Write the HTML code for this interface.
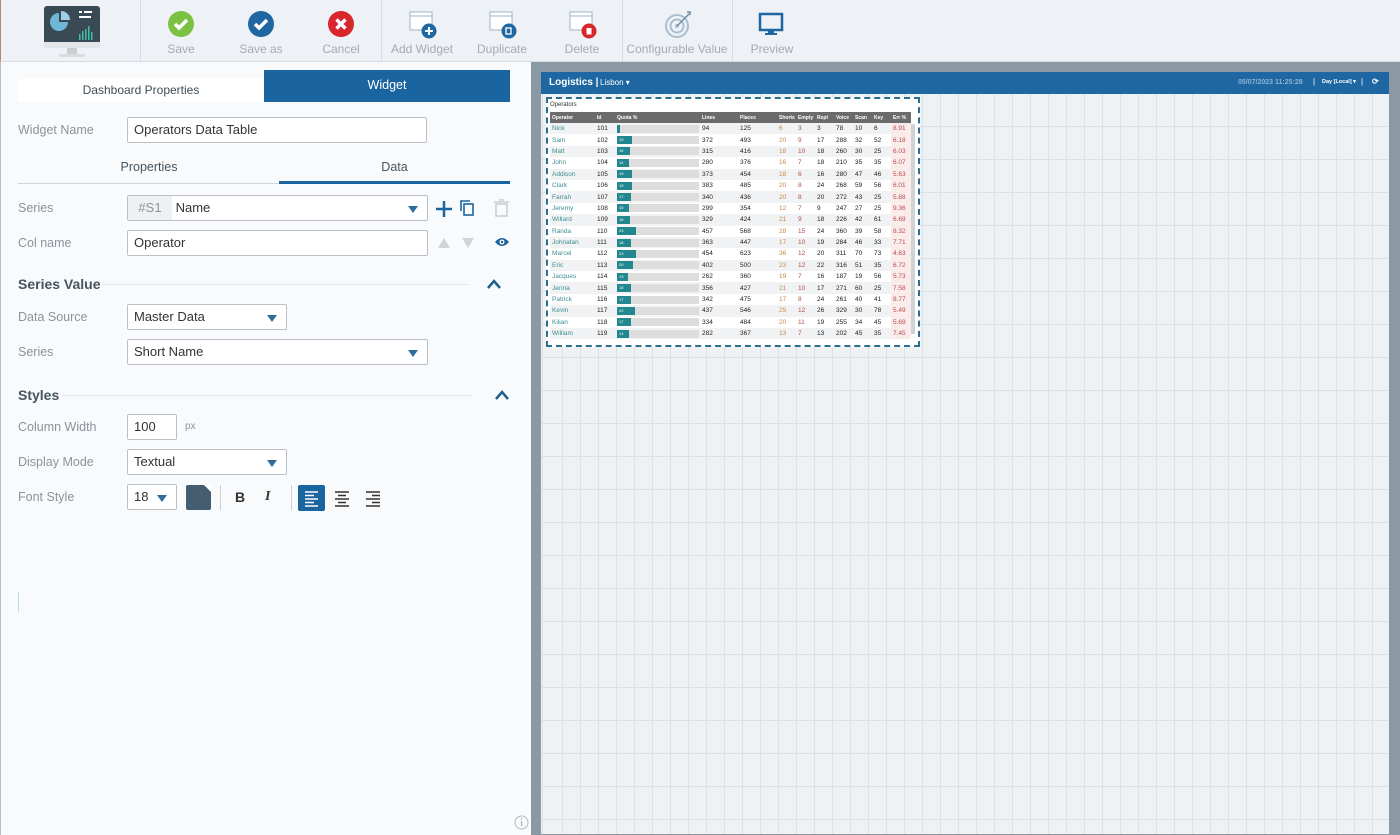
<!DOCTYPE html>
<html><head><meta charset="utf-8"><style>
*{box-sizing:border-box;margin:0;padding:0}
body{width:1400px;height:835px;overflow:hidden;font-family:"Liberation Sans",sans-serif;background:#f7f9fb;position:relative;color:#333}
.abs{position:absolute}
#tb{left:0;top:0;width:1400px;height:62px;background:#eef1f5;border-bottom:1px solid #d5dce3;border-left:1px solid #b88a6a}
.sep{position:absolute;top:0;width:1px;height:62px;background:#d5dce3}
.btn{position:absolute;top:0;width:110px;text-align:center}
.btn .lb{position:absolute;top:42px;left:0;width:110px;font-size:12px;color:#a3abb3}
.btn svg{position:absolute;top:10px;left:41px}
#lp{left:0;top:62px;width:531px;height:773px;background:#f8fafc;border-left:1px solid #b8bec4}
.lbl{position:absolute;font-size:12.5px;color:#8a949c}
.inp{position:absolute;background:#fff;border:1px solid #b9c0c7;border-radius:2px;font-size:13px;color:#333;padding-left:6px;line-height:24px;height:26px}
.dd::after{content:"";position:absolute;right:9px;top:10px;border-left:5px solid transparent;border-right:5px solid transparent;border-top:7px solid #2f6d9c}
.hd{position:absolute;font-size:14px;font-weight:bold;color:#47555f}
.hl{position:absolute;height:1px;background:#e4e8ec}
#cv{left:531px;top:62px;width:869px;height:773px;background:#8a99a3}
#cin{left:541px;top:72px;width:848px;height:762px;background-color:#eef2f5;
background-image:repeating-linear-gradient(to right,transparent 0,transparent 17px,#dde1e5 17px,#dde1e5 18px),repeating-linear-gradient(to bottom,transparent 0,transparent 32px,#dde1e5 32px,#dde1e5 33px);background-position:4px 22px}
#bar{left:541px;top:72px;width:848px;height:22px;background:#1e67a3}
#w{left:546px;top:97px;width:374px;height:250px;border:2px dashed #2b6f8c;background:#fff}
table{border-collapse:collapse;font-size:6.5px;position:absolute;left:2px;top:13px;width:361px;table-layout:fixed}
th{background:#6b6b6b;color:#fff;text-align:left;font-weight:bold;height:11px;padding-left:2px;font-size:5px}
td{height:11.4px;padding-left:2px;color:#222;white-space:nowrap}
tr:nth-child(even) td{background:#f1f2f3}
td.n{color:#3a8f93}td.o{color:#c58a4a}td.r{color:#b84a4a}td.e{color:#b84a4a;background:#fbecec!important}
.qb{height:8px;background:#ddd;position:relative;width:82px}
.qb i{position:absolute;left:0;top:0;height:8px;background:#23878f;color:#fff;font-size:4px;font-style:normal;padding-left:2px;line-height:8px}
</style></head><body>
<div id="tb" class="abs">
 <svg class="abs" style="left:42px;top:5px" width="58" height="54" viewBox="0 0 58 54"><rect x="1" y="1" width="56" height="38" rx="3" fill="#3a4a55"/><rect x="1" y="37" width="56" height="6" fill="#e3e7ea"/><rect x="24" y="43" width="10" height="6" fill="#c9ced2"/><rect x="16" y="49" width="26" height="3" rx="1" fill="#d9dde0"/><path d="M16 8 A9 9 0 1 0 25 17 L16 17Z" fill="#6fb7d6"/><path d="M18 6 A9 9 0 0 1 27 15 L18 15Z" fill="#9fd0e6"/><rect x="36" y="6" width="3" height="2" fill="#fff"/><rect x="41" y="6" width="8" height="2" fill="#fff"/><rect x="36" y="11" width="12" height="2" fill="#fff"/><g fill="#3ec0a8"><rect x="36" y="29" width="1.5" height="6"/><rect x="39" y="26" width="1.5" height="9"/><rect x="42" y="24" width="1.5" height="11"/><rect x="45" y="21" width="1.5" height="14"/><rect x="48" y="27" width="1.5" height="8"/></g></svg>
 <div class="sep" style="left:139px"></div><div class="sep" style="left:380px"></div><div class="sep" style="left:621px"></div><div class="sep" style="left:731px"></div>
 <div class="btn" style="left:125px"><svg width="28" height="28"><circle cx="14" cy="14" r="13" fill="#7cc242"/><path d="M8 14l4 4 8-8" stroke="#fff" stroke-width="3.5" fill="none"/></svg><div class="lb">Save</div></div>
 <div class="btn" style="left:205px"><svg width="28" height="28"><circle cx="14" cy="14" r="13" fill="#1e67a3"/><path d="M8 14l4 4 8-8" stroke="#fff" stroke-width="3.5" fill="none"/></svg><div class="lb">Save as</div></div>
 <div class="btn" style="left:285px"><svg width="28" height="28"><circle cx="14" cy="14" r="13" fill="#d8262c"/><path d="M9.5 9.5l9 9M18.5 9.5l-9 9" stroke="#fff" stroke-width="3.5"/></svg><div class="lb">Cancel</div></div>
 <div class="btn" style="left:366px"><svg width="30" height="30"><rect x="2" y="2" width="22" height="18" fill="#fff" stroke="#9db4c8"/><line x1="2" y1="6" x2="24" y2="6" stroke="#9db4c8"/><circle cx="21" cy="21" r="7.5" fill="#1e67a3"/><path d="M21 17v8M17 21h8" stroke="#fff" stroke-width="2"/></svg><div class="lb">Add Widget</div></div>
 <div class="btn" style="left:446px"><svg width="30" height="30"><rect x="2" y="2" width="22" height="18" fill="#fff" stroke="#9db4c8"/><line x1="2" y1="6" x2="24" y2="6" stroke="#9db4c8"/><circle cx="21" cy="21" r="7.5" fill="#1e67a3"/><rect x="18" y="18" width="5" height="6" fill="none" stroke="#fff" stroke-width="1.3"/></svg><div class="lb">Duplicate</div></div>
 <div class="btn" style="left:526px"><svg width="30" height="30"><rect x="2" y="2" width="22" height="18" fill="#fff" stroke="#9db4c8"/><line x1="2" y1="6" x2="24" y2="6" stroke="#9db4c8"/><circle cx="21" cy="21" r="7.5" fill="#d8262c"/><rect x="18.5" y="18" width="5" height="6.5" fill="#fff"/></svg><div class="lb">Delete</div></div>
 <div class="btn" style="left:621px"><svg width="30" height="30"><circle cx="14" cy="16" r="11" fill="none" stroke="#a9bfd1" stroke-width="2"/><circle cx="14" cy="16" r="6.5" fill="none" stroke="#a9bfd1" stroke-width="2"/><circle cx="14" cy="16" r="2" fill="#a9bfd1"/><path d="M14 16L26 4" stroke="#6f8aa1" stroke-width="1.5"/><path d="M24 2l3 0 0 3" stroke="#6f8aa1" stroke-width="1.5" fill="none"/></svg><div class="lb">Configurable Value</div></div>
 <div class="btn" style="left:716px"><svg width="30" height="30"><rect x="2" y="4" width="22" height="16" fill="none" stroke="#1e67a3" stroke-width="2.5"/><rect x="10" y="20" width="6" height="3" fill="#1e67a3"/><rect x="7" y="23" width="12" height="2" fill="#1e67a3"/></svg><div class="lb">Preview</div></div>
</div>

<div id="lp" class="abs">
 <div class="abs" style="left:17px;top:17px;width:246px;height:23px;background:#fff;font-size:12px;color:#3f4d58;text-align:center;line-height:22px">Dashboard Properties</div>
 <div class="abs" style="left:263px;top:8px;width:246px;height:32px;background:#1a64a0;font-size:12.5px;color:#fff;text-align:center;line-height:30px">Widget</div>
 <div class="lbl" style="left:17px;top:61px">Widget Name</div>
 <div class="inp" style="left:126px;top:55px;width:300px">Operators Data Table</div>
 <div class="abs" style="left:17px;top:98px;width:262px;font-size:12.5px;color:#47555f;text-align:center">Properties</div>
 <div class="abs" style="left:278px;top:98px;width:231px;font-size:12.5px;color:#47555f;text-align:center">Data</div>
 <div class="hl" style="left:17px;top:121px;width:261px;background:#cfd6dc"></div>
 <div class="abs" style="left:278px;top:119px;width:231px;height:3px;background:#1a64a0"></div>
 <div class="lbl" style="left:17px;top:139px">Series</div>
 <div class="inp dd" style="left:126px;top:133px;width:301px;padding-left:0"><span style="display:inline-block;width:44px;background:#eef1f4;color:#8a949c;text-align:center;height:24px">#S1</span> Name</div>
 <svg class="abs" style="left:433px;top:137px" width="20" height="20"><path d="M10 2v16M2 10h16" stroke="#1a64a0" stroke-width="2.5"/></svg>
 <svg class="abs" style="left:458px;top:137px" width="18" height="18"><rect x="5" y="5" width="9" height="11" fill="none" stroke="#1a64a0" stroke-width="1.6"/><path d="M2 12V2h9" fill="none" stroke="#1a64a0" stroke-width="1.6"/></svg>
 <svg class="abs" style="left:492px;top:137px" width="18" height="18"><rect x="3" y="5" width="11" height="12" fill="none" stroke="#c9cfd4" stroke-width="1.6"/><path d="M1 3h15M6 1h5" stroke="#c9cfd4" stroke-width="1.6"/></svg>
 <div class="lbl" style="left:17px;top:174px">Col name</div>
 <div class="inp" style="left:126px;top:168px;width:301px">Operator</div>
 <svg class="abs" style="left:436px;top:175px" width="40" height="12"><path d="M1 11L7 1 13 11Z" fill="#d0d5da"/><path d="M25 1h12L31 11Z" fill="#d0d5da"/></svg>
 <svg class="abs" style="left:493px;top:174px" width="16" height="12"><path d="M1 6Q8-2 15 6Q8 14 1 6Z" fill="#1a64a0"/><circle cx="8" cy="6" r="2.5" fill="#fff"/><circle cx="8" cy="6" r="1.2" fill="#1a64a0"/></svg>
 <div class="hd" style="left:17px;top:214px">Series Value</div>
 <div class="hl" style="left:102px;top:222px;width:366px"></div>
 <svg class="abs" style="left:485px;top:216px" width="16" height="12"><path d="M2 10L8 3 14 10" stroke="#1f5f8b" stroke-width="2.5" fill="none"/></svg>
 <div class="lbl" style="left:17px;top:248px">Data Source</div>
 <div class="inp dd" style="left:126px;top:242px;width:160px">Master Data</div>
 <div class="lbl" style="left:17px;top:283px">Series</div>
 <div class="inp dd" style="left:126px;top:277px;width:301px">Short Name</div>
 <div class="hd" style="left:17px;top:325px">Styles</div>
 <div class="hl" style="left:62px;top:333px;width:409px"></div>
 <svg class="abs" style="left:493px;top:327px" width="16" height="12"><path d="M2 10L8 3 14 10" stroke="#1f5f8b" stroke-width="2.5" fill="none"/></svg>
 <div class="lbl" style="left:17px;top:358px">Column Width</div>
 <div class="inp" style="left:126px;top:352px;width:50px">100</div>
 <div class="lbl" style="left:184px;top:359px;font-size:10px">px</div>
 <div class="lbl" style="left:17px;top:393px">Display Mode</div>
 <div class="inp dd" style="left:126px;top:387px;width:160px">Textual</div>
 <div class="lbl" style="left:17px;top:428px">Font Style</div>
 <div class="inp dd" style="left:126px;top:422px;width:50px">18</div>
 <div class="abs" style="left:185px;top:423px;width:25px;height:25px;background:#445d70;border-radius:2px"></div>
 <div class="abs" style="left:203px;top:423px;width:0;height:0;border-left:7px solid transparent;border-top:7px solid #fff"></div>
 <div class="abs" style="left:219px;top:423px;width:1px;height:25px;background:#c9cfd4"></div>
 <div class="abs" style="left:234px;top:427px;font-weight:bold;font-size:14px;color:#333">B</div>
 <div class="abs" style="left:264px;top:427px;font-weight:bold;font-style:italic;font-size:14px;color:#333;font-family:'Liberation Serif',serif">I</div>
 <div class="abs" style="left:290px;top:423px;width:1px;height:25px;background:#c9cfd4"></div>
 <svg class="abs" style="left:297px;top:423px" width="90" height="26"><rect width="27" height="26" rx="2" fill="#1a64a0"/><path d="M7 7h13M7 10.5h9M7 14h13M7 17.5h9M7 21h13" stroke="#fff" stroke-width="1.6"/><path d="M37 7h14M40 10.5h8M37 14h14M40 17.5h8M37 21h14" stroke="#333" stroke-width="1.6"/><path d="M68 7h14M74 10.5h8M68 14h14M74 17.5h8M68 21h14" stroke="#333" stroke-width="1.6"/></svg>
 <div class="abs" style="left:17px;top:530px;width:1px;height:20px;background:#b5e0e6"></div>
 <svg class="abs" style="left:513px;top:753px" width="15" height="15"><circle cx="7.5" cy="7.5" r="6.5" fill="none" stroke="#b0bac2"/><path d="M7.5 6v5" stroke="#b0bac2" stroke-width="1.3"/><circle cx="7.5" cy="4" r="0.9" fill="#b0bac2"/></svg>
</div>

<div id="cv" class="abs"></div>
<div id="cin" class="abs"></div>
<div id="bar" class="abs">
 <span class="abs" style="left:8px;top:5px;color:#fff;font-weight:bold;font-size:10px">Logistics |</span>
 <span class="abs" style="left:59px;top:6px;color:#fff;font-size:8px">Lisbon ▾</span>
 <span class="abs" style="left:697px;top:7px;color:#8fb3d4;font-size:7px;font-weight:bold">05/07/2023 11:25:28</span>
 <span class="abs" style="left:772px;top:5px;color:#fff;font-size:8px">|</span>
 <span class="abs" style="left:781px;top:7px;color:#fff;font-size:5.5px;font-weight:bold">Day [Local] ▾</span>
 <span class="abs" style="left:820px;top:5px;color:#fff;font-size:8px">|</span>
 <span class="abs" style="left:831px;top:5px;color:#fff;font-size:8px;font-weight:bold">⟳</span>
</div>
<div id="w" class="abs">
 <div class="abs" style="left:2px;top:3px;font-size:6px;color:#333">Operators</div>
 <div class="abs" style="left:362px;top:25px;width:5px;height:210px;background:#cfd3d6"></div>
 <table>
 <colgroup><col style="width:45px"><col style="width:20px"><col style="width:85px"><col style="width:38px"><col style="width:39px"><col style="width:19px"><col style="width:19px"><col style="width:19px"><col style="width:19px"><col style="width:19px"><col style="width:19px"><col style="width:20px"></colgroup>
 <tr><th>Operator</th><th>Id</th><th>Quota %</th><th>Lines</th><th>Places</th><th>Shorts</th><th>Empty</th><th>Repl</th><th>Voice</th><th>Scan</th><th>Key</th><th>Err %</th></tr>
 <tr><td class="n">Nick</td><td>101</td><td><div class="qb"><i style="width:3px;padding:0"></i></div></td><td>94</td><td>125</td><td class="o">6</td><td class="r">3</td><td>3</td><td>78</td><td>10</td><td>6</td><td class="e">8.91</td></tr>
 <tr><td class="n">Sam</td><td>102</td><td><div class="qb"><i style="width:15px">19</i></div></td><td>372</td><td>493</td><td class="o">20</td><td class="r">9</td><td>17</td><td>288</td><td>32</td><td>52</td><td class="e">6.18</td></tr>
 <tr><td class="n">Matt</td><td>103</td><td><div class="qb"><i style="width:13px">16</i></div></td><td>315</td><td>416</td><td class="o">18</td><td class="r">10</td><td>18</td><td>260</td><td>30</td><td>25</td><td class="e">6.03</td></tr>
 <tr><td class="n">John</td><td>104</td><td><div class="qb"><i style="width:12px">14</i></div></td><td>280</td><td>376</td><td class="o">16</td><td class="r">7</td><td>18</td><td>210</td><td>35</td><td>35</td><td class="e">6.07</td></tr>
 <tr><td class="n">Addison</td><td>105</td><td><div class="qb"><i style="width:15px">19</i></div></td><td>373</td><td>454</td><td class="o">18</td><td class="r">6</td><td>16</td><td>280</td><td>47</td><td>46</td><td class="e">5.63</td></tr>
 <tr><td class="n">Clark</td><td>106</td><td><div class="qb"><i style="width:15px">19</i></div></td><td>383</td><td>485</td><td class="o">20</td><td class="r">8</td><td>24</td><td>268</td><td>59</td><td>56</td><td class="e">6.01</td></tr>
 <tr><td class="n">Farrah</td><td>107</td><td><div class="qb"><i style="width:14px">17</i></div></td><td>340</td><td>436</td><td class="o">20</td><td class="r">8</td><td>20</td><td>272</td><td>43</td><td>25</td><td class="e">5.88</td></tr>
 <tr><td class="n">Jeremy</td><td>108</td><td><div class="qb"><i style="width:12px">15</i></div></td><td>299</td><td>354</td><td class="o">12</td><td class="r">7</td><td>9</td><td>247</td><td>27</td><td>25</td><td class="e">9.36</td></tr>
 <tr><td class="n">Willard</td><td>109</td><td><div class="qb"><i style="width:13px">16</i></div></td><td>329</td><td>424</td><td class="o">21</td><td class="r">9</td><td>18</td><td>226</td><td>42</td><td>61</td><td class="e">6.69</td></tr>
 <tr><td class="n">Randa</td><td>110</td><td><div class="qb"><i style="width:19px">23</i></div></td><td>457</td><td>568</td><td class="o">28</td><td class="r">15</td><td>24</td><td>360</td><td>39</td><td>58</td><td class="e">8.32</td></tr>
 <tr><td class="n">Johnatan</td><td>111</td><td><div class="qb"><i style="width:14px">18</i></div></td><td>363</td><td>447</td><td class="o">17</td><td class="r">10</td><td>19</td><td>284</td><td>46</td><td>33</td><td class="e">7.71</td></tr>
 <tr><td class="n">Marcel</td><td>112</td><td><div class="qb"><i style="width:19px">23</i></div></td><td>454</td><td>623</td><td class="o">36</td><td class="r">12</td><td>20</td><td>311</td><td>70</td><td>73</td><td class="e">4.63</td></tr>
 <tr><td class="n">Eric</td><td>113</td><td><div class="qb"><i style="width:16px">20</i></div></td><td>402</td><td>500</td><td class="o">23</td><td class="r">12</td><td>22</td><td>316</td><td>51</td><td>35</td><td class="e">6.72</td></tr>
 <tr><td class="n">Jacques</td><td>114</td><td><div class="qb"><i style="width:11px">13</i></div></td><td>262</td><td>360</td><td class="o">19</td><td class="r">7</td><td>16</td><td>187</td><td>19</td><td>56</td><td class="e">5.73</td></tr>
 <tr><td class="n">Jenna</td><td>115</td><td><div class="qb"><i style="width:14px">18</i></div></td><td>356</td><td>427</td><td class="o">21</td><td class="r">10</td><td>17</td><td>271</td><td>60</td><td>25</td><td class="e">7.58</td></tr>
 <tr><td class="n">Patrick</td><td>116</td><td><div class="qb"><i style="width:14px">17</i></div></td><td>342</td><td>475</td><td class="o">17</td><td class="r">8</td><td>24</td><td>261</td><td>40</td><td>41</td><td class="e">8.77</td></tr>
 <tr><td class="n">Kevin</td><td>117</td><td><div class="qb"><i style="width:18px">22</i></div></td><td>437</td><td>546</td><td class="o">25</td><td class="r">12</td><td>26</td><td>329</td><td>30</td><td>78</td><td class="e">5.49</td></tr>
 <tr><td class="n">Kilian</td><td>118</td><td><div class="qb"><i style="width:14px">17</i></div></td><td>334</td><td>484</td><td class="o">20</td><td class="r">11</td><td>19</td><td>255</td><td>34</td><td>45</td><td class="e">5.69</td></tr>
 <tr><td class="n">William</td><td>119</td><td><div class="qb"><i style="width:12px">14</i></div></td><td>282</td><td>367</td><td class="o">13</td><td class="r">7</td><td>13</td><td>202</td><td>45</td><td>35</td><td class="e">7.45</td></tr>
 </table>
</div>
</body></html>
